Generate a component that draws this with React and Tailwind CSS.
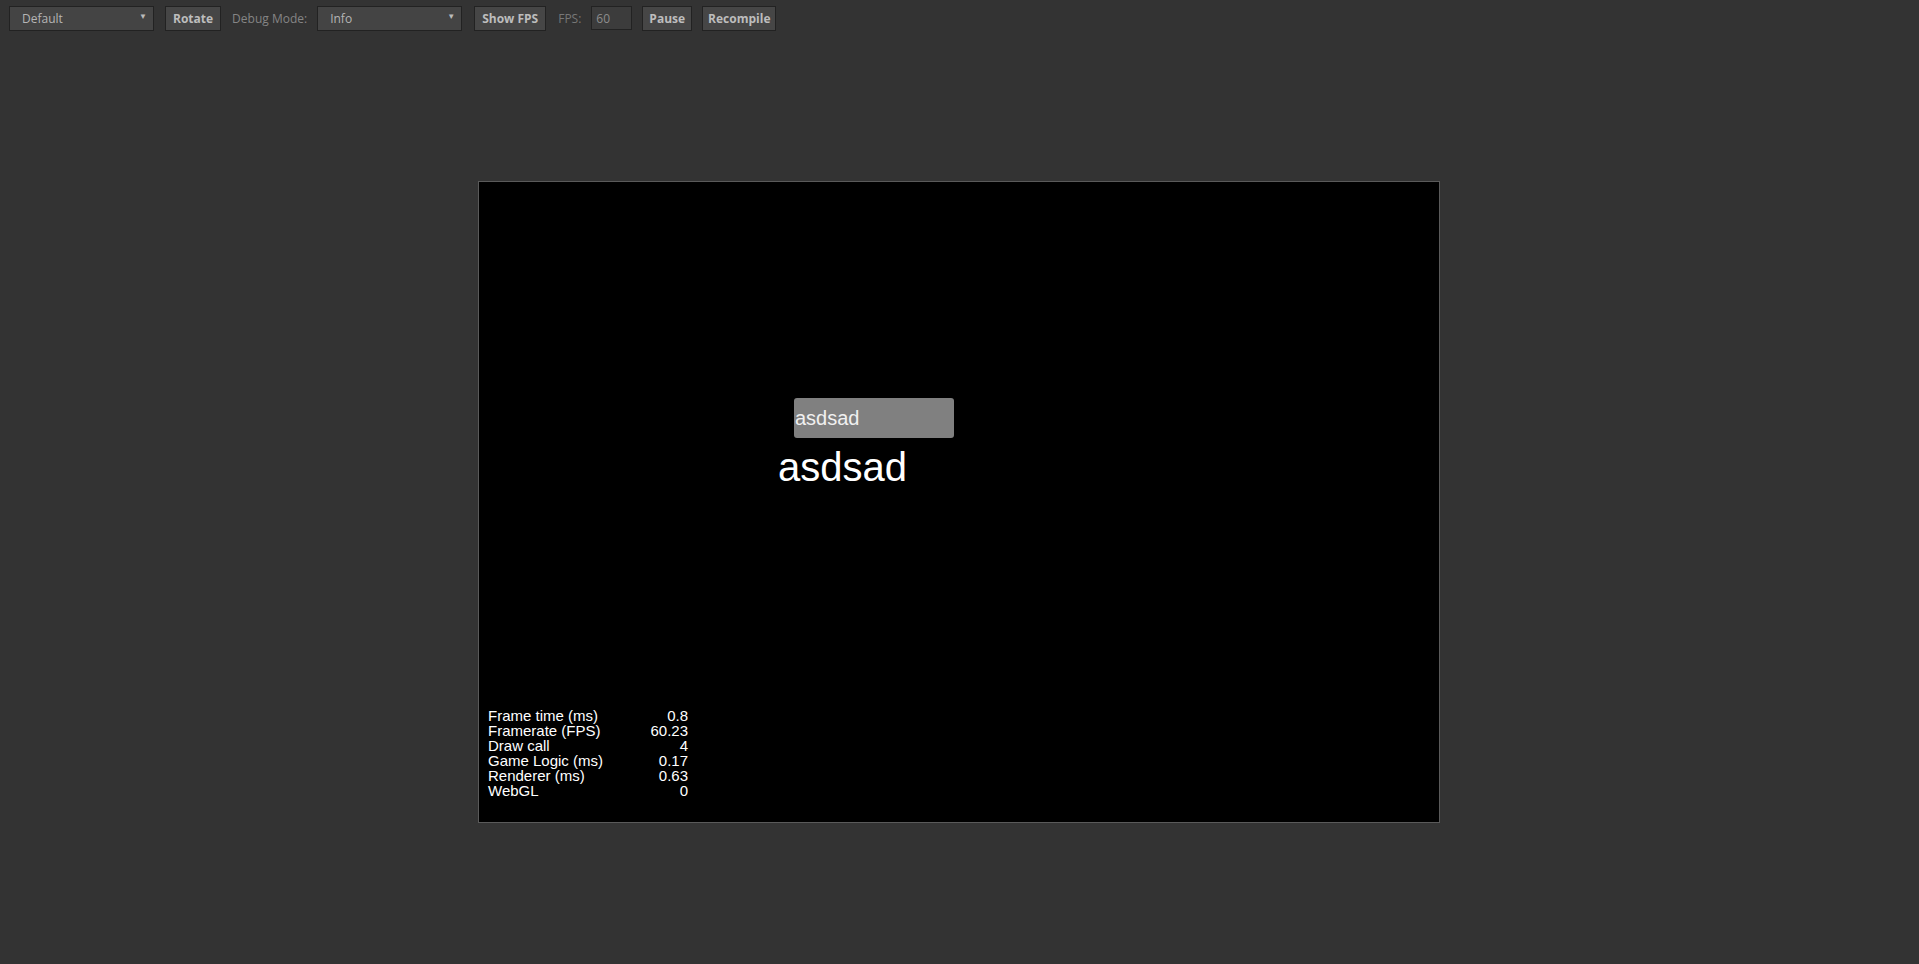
import React, { useState } from 'react';

const ui = { fontFamily: '"Open Sans", "Noto Sans", "Liberation Sans", sans-serif' };
const arial = { fontFamily: '"Liberation Sans", Arial, sans-serif' };

const stats = [
  ['Frame time (ms)', '0.8'],
  ['Framerate (FPS)', '60.23'],
  ['Draw call', '4'],
  ['Game Logic (ms)', '0.17'],
  ['Renderer (ms)', '0.63'],
  ['WebGL', '0'],
];

const Select = ({ value, width }) => (
  <div
    className={`relative h-[25px] ${width} flex items-center border border-[#222] bg-[#444] text-[12px] text-[#b5b5b5]`}
  >
    <span className="pl-3 pt-[2px]">{value}</span>
    <span className="absolute right-[6px] top-[3px] text-[8px] text-[#bbb]">▼</span>
  </div>
);

const Button = ({ children, px = 'px-[7px]' }) => (
  <button className={`h-[25px] ${px} pt-[2px] border border-[#222] bg-[#464646] text-[12px] font-bold text-[#bdbdbd] leading-none`}>
    {children}
  </button>
);

const App = () => {
  const [text] = useState('asdsad');

  return (
    <div className="min-h-[964px] bg-[#333333]" style={ui}>
      <div className="flex items-center h-[36px] pl-[9px]">
        <Select value="Default" width="w-[145px]" />
        <div className="ml-[11px]"><Button>Rotate</Button></div>
        <span className="ml-[11px] pt-[2px] text-[12px] text-[#858585]">Debug Mode:</span>
        <div className="ml-[10px]"><Select value="Info" width="w-[145px]" /></div>
        <div className="ml-[12px]"><Button>Show FPS</Button></div>
        <span className="ml-[12px] pt-[2px] text-[12px] text-[#777]">FPS:</span>
        <div className="ml-[10px] h-[24px] w-[41px] flex items-center border border-[#222] bg-[#3c3c3c] pl-[4px] pt-[2px] text-[12px] text-[#8d8d8d]">
          60
        </div>
        <div className="ml-[10px]"><Button px="px-[6px]">Pause</Button></div>
        <div className="ml-[10px]"><Button px="px-[5px]">Recompile</Button></div>
      </div>

      <div className="flex justify-center pt-[145px] pr-[1px]">
        <div className="relative w-[962px] h-[642px] border border-[#5a5a5a] bg-black" style={arial}>
          <div className="absolute left-[315px] top-[216px] w-[160px] h-[40px] rounded-[3px] bg-[#808080] flex items-center pl-[1px] text-[20px] text-[#f0f0f0]">
            {text}
          </div>
          <div className="absolute left-[299px] top-[265px] text-[40px] leading-[40px] text-white">
            {text}
          </div>
          <div className="absolute left-[9px] top-[526px] w-[200px] text-[15px] leading-[15px] text-white">
            {stats.map(([k, v]) => (
              <div key={k} className="flex justify-between">
                <span>{k}</span>
                <span>{v}</span>
              </div>
            ))}
          </div>
        </div>
      </div>
    </div>
  );
};

export default App;
